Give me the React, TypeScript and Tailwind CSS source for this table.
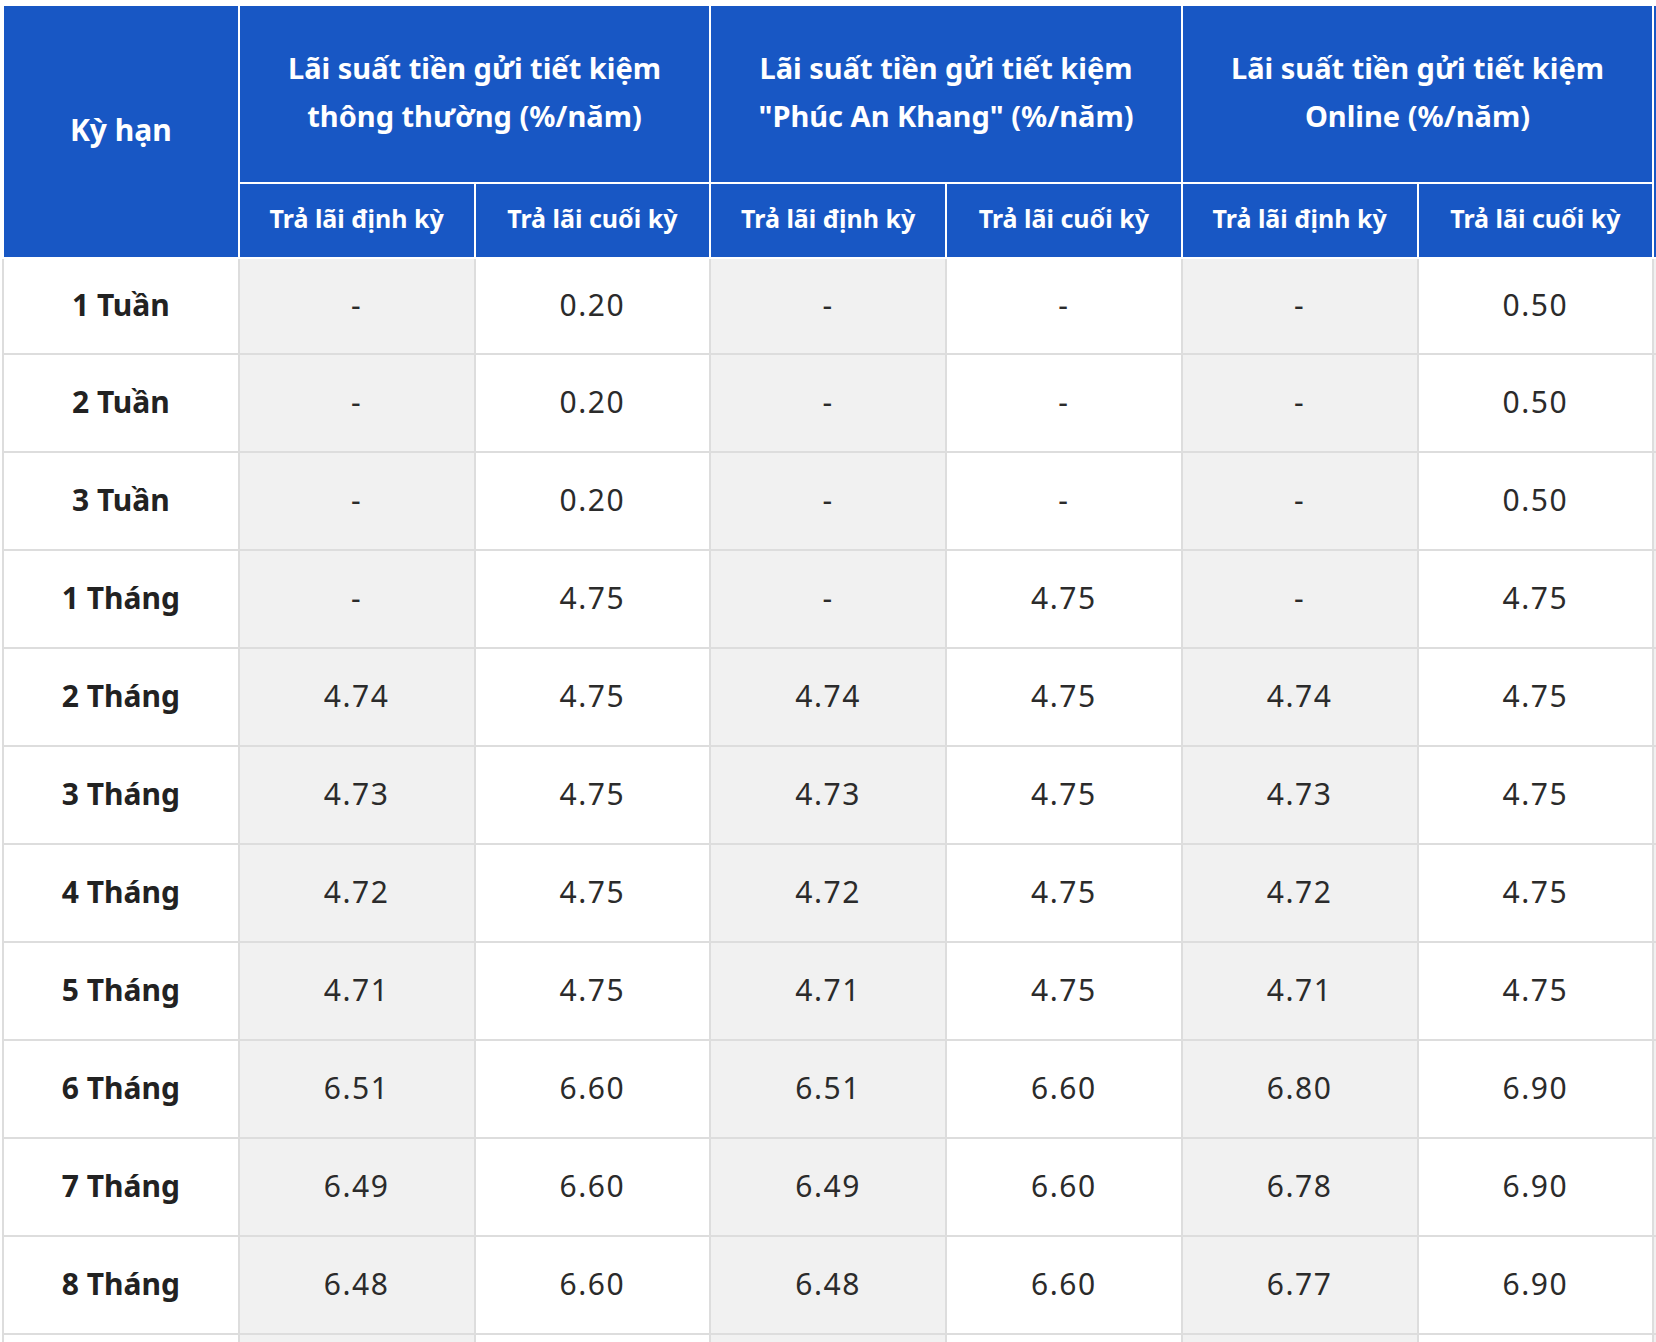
import React from "react";

type Row = { term: string; values: string[] };

const groups = [
  ["Lãi suất tiền gửi tiết kiệm", "thông thường (%/năm)"],
  ["Lãi suất tiền gửi tiết kiệm", "\"Phúc An Khang\" (%/năm)"],
  ["Lãi suất tiền gửi tiết kiệm", "Online (%/năm)"],
];

const rows: Row[] = [
  { term: "1 Tuần", values: ["-", "0.20", "-", "-", "-", "0.50"] },
  { term: "2 Tuần", values: ["-", "0.20", "-", "-", "-", "0.50"] },
  { term: "3 Tuần", values: ["-", "0.20", "-", "-", "-", "0.50"] },
  { term: "1 Tháng", values: ["-", "4.75", "-", "4.75", "-", "4.75"] },
  { term: "2 Tháng", values: ["4.74", "4.75", "4.74", "4.75", "4.74", "4.75"] },
  { term: "3 Tháng", values: ["4.73", "4.75", "4.73", "4.75", "4.73", "4.75"] },
  { term: "4 Tháng", values: ["4.72", "4.75", "4.72", "4.75", "4.72", "4.75"] },
  { term: "5 Tháng", values: ["4.71", "4.75", "4.71", "4.75", "4.71", "4.75"] },
  { term: "6 Tháng", values: ["6.51", "6.60", "6.51", "6.60", "6.80", "6.90"] },
  { term: "7 Tháng", values: ["6.49", "6.60", "6.49", "6.60", "6.78", "6.90"] },
  { term: "8 Tháng", values: ["6.48", "6.60", "6.48", "6.60", "6.77", "6.90"] },
];

export default function App() {
  return (
    <div
      className="h-screen w-full overflow-hidden bg-white pt-1 pl-[2px]"
      style={{ fontFamily: '"Noto Sans", "Open Sans", sans-serif' }}
    >
      <table className="table-fixed border-collapse w-[1888px]">
        <colgroup>
          {Array.from({ length: 8 }).map((_, i) => (
            <col key={i} className="w-[235.7px]" />
          ))}
        </colgroup>
        <thead>
          <tr className="h-[178px]">
            <th
              rowSpan={2}
              className="border-2 border-white bg-[#1857c4] text-[30px] font-bold text-white leading-[1.5] p-0 pb-[4px]"
            >
              Kỳ hạn
            </th>
            {groups.map((g, i) => (
              <th
                key={i}
                colSpan={2}
                className="border-2 border-white bg-[#1857c4] text-[29px] font-bold text-white leading-[1.65] p-0 pb-[4px]"
              >
                {g[0]}
                <br />
                {g[1]}
              </th>
            ))}
            <th rowSpan={2} className="border-2 border-white bg-[#1857c4] p-0" />
          </tr>
          <tr className="h-[75px]">
            {groups.map((_, i) => (
              <React.Fragment key={i}>
                <th className="border-2 border-white bg-[#1857c4] text-[25px] font-bold text-white leading-[1.5] p-0 pb-[3px]">
                  Trả lãi định kỳ
                </th>
                <th className="border-2 border-white bg-[#1857c4] text-[25px] font-bold text-white leading-[1.5] p-0 pb-[3px]">
                  Trả lãi cuối kỳ
                </th>
              </React.Fragment>
            ))}
          </tr>
        </thead>
        <tbody>
          {rows.map((r, i) => (
            <tr key={r.term} className={i === 0 ? "h-[96px]" : "h-[98px]"}>
              <td className="border-2 border-[#dddddd] bg-white text-center text-[30px] font-bold text-[#222222] p-0 pb-[3px]">
                {r.term}
              </td>
              {r.values.map((v, j) => (
                <td
                  key={j}
                  className={`border-2 border-[#dddddd] text-center text-[30px] tracking-[1.5px] text-[#2b2b2b] p-0 pb-[3px] ${
                    j % 2 === 0 ? "bg-[#f1f1f1]" : "bg-white"
                  }`}
                >
                  {v}
                </td>
              ))}
              <td className="border-2 border-[#dddddd] bg-[#f1f1f1] p-0" />
            </tr>
          ))}
          {/* next row, cut by the bottom of the window */}
          <tr className="h-[98px]">
            <td className="border-2 border-[#dddddd] bg-white p-0" />
            {Array.from({ length: 6 }).map((_, j) => (
              <td
                key={j}
                className={`border-2 border-[#dddddd] p-0 ${j % 2 === 0 ? "bg-[#f1f1f1]" : "bg-white"}`}
              />
            ))}
            <td className="border-2 border-[#dddddd] bg-[#f1f1f1] p-0" />
          </tr>
        </tbody>
      </table>
    </div>
  );
}
